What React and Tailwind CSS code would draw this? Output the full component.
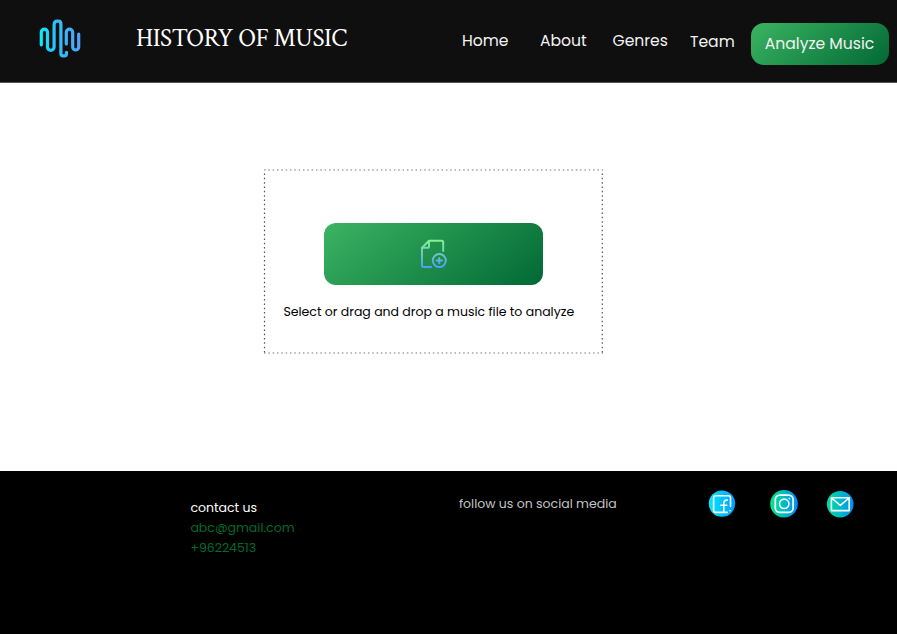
function Logo() {
  return (
    <svg className="block h-[40px] w-[44px]" viewBox="0 0 44 40" fill="none">
      <defs>
        <linearGradient id="wave" gradientUnits="userSpaceOnUse" x1="2" y1="0" x2="42" y2="0">
          <stop stopColor="#00f2fe" />
          <stop offset="0.3" stopColor="#24c8fc" />
          <stop offset="1" stopColor="#4fa2fa" />
        </linearGradient>
      </defs>
      <path
        d="M3.3 25.8V13.3a3.1 3.1 0 0 1 6.2 0v14.7a3.3 3.3 0 0 0 6.6 0V5.4q0-3.2 3-3.2h1.4q2.4 0 2.4 3v29.3q0 2.3 2.3 2.3h1.2q2.1 0 2.1-2.4v-1M28.3 25V13.3a3.2 3.2 0 0 1 6.4 0v14.7a3 3 0 0 0 6 0V15"
        stroke="url(#wave)"
        strokeWidth="3.2"
        strokeLinecap="round"
        strokeLinejoin="round"
      />
    </svg>
  );
}

function AddFileIcon() {
  return (
    <svg className="block h-[30px] w-[28px]" viewBox="0 0 28 30" fill="none">
      <defs>
        <linearGradient id="file" gradientUnits="userSpaceOnUse" x1="0" y1="1" x2="0" y2="29">
          <stop stopColor="#86f28e" />
          <stop offset="1" stopColor="#5299fa" />
        </linearGradient>
      </defs>
      <g stroke="url(#file)" strokeWidth="2" strokeLinecap="round" strokeLinejoin="round">
        <path d="M23.2 12V3.2q0-1.4-1.4-1.4H9L2 8.8V26.4q0 1.5 1.5 1.5H11" />
        <path d="M9 2v5.2q0 1.6-1.6 1.6H2.2" />
        <circle cx="19.3" cy="21.6" r="6.5" />
        <path d="M19.3 18.9v5.4M16.6 21.6h5.4" />
      </g>
    </svg>
  );
}

function FacebookIcon() {
  return (
    <svg className="block size-[28px]" viewBox="0 0 28 28" fill="none">
      <defs>
        <linearGradient id="fb" x1="0" y1="0" x2="1" y2="0">
          <stop stopColor="#00eafe" />
          <stop offset="1" stopColor="#049cff" />
        </linearGradient>
      </defs>
      <circle cx="14" cy="13.6" r="13.2" fill="url(#fb)" />
      <g stroke="#fff" strokeWidth="1.6" strokeLinecap="round">
        <path d="M22.5 16.5V7.7q0-1.9-1.9-1.9H7.5q-1.9 0-1.9 1.9v12.8q0 1.9 1.9 1.9h11.8M22.1 20.6v.1" />
        <path d="M15.8 22.1v-9q0-3 3-3h.5M12.8 15.2h6" />
      </g>
    </svg>
  );
}

function InstagramIcon() {
  return (
    <svg className="block size-[28px]" viewBox="0 0 28 28" fill="none">
      <defs>
        <linearGradient id="ig" x1="0" y1="0" x2="1" y2="0">
          <stop offset="0.05" stopColor="#00e68c" />
          <stop offset="1" stopColor="#008cff" />
        </linearGradient>
      </defs>
      <circle cx="14" cy="13.8" r="13.8" fill="url(#ig)" />
      <rect x="5.3" y="5.1" width="17.8" height="17.3" rx="4.5" stroke="#fff" strokeWidth="1.7" />
      <circle cx="14.2" cy="13.8" r="4.7" stroke="#fff" strokeWidth="1.6" />
      <circle cx="19.4" cy="8.6" r="0.9" fill="#fff" />
    </svg>
  );
}

function MailIcon() {
  return (
    <svg className="block size-[28px]" viewBox="0 0 28 28" fill="none">
      <defs>
        <linearGradient id="mail" x1="0" y1="0" x2="1" y2="0">
          <stop offset="0.05" stopColor="#00dd9c" />
          <stop offset="1" stopColor="#0090f8" />
        </linearGradient>
      </defs>
      <circle cx="14.2" cy="14.2" r="13.3" fill="url(#mail)" />
      <path d="M5.4 7.8h17.8v12.8H5.4zM5.6 8l8.7 7.3L23 8" stroke="#fff" strokeWidth="1.6" strokeLinejoin="round" />
    </svg>
  );
}

export default function App() {
  return (
    <div className="flex h-[634px] w-[897px] flex-col overflow-hidden bg-white font-['Poppins','Inter',sans-serif]">
      <header className="flex h-[83px] shrink-0 items-start border-b border-[#555] bg-[#0f0f0f] whitespace-nowrap text-[#f2f2f2]">
        <div className="mt-[18.5px] ml-[38px]">
          <Logo />
        </div>
        <h1 className="mt-[23px] ml-[54px] w-[326px] font-['Crimson_Text','Liberation_Serif',serif] text-[25px] leading-8 tracking-[-0.45px] text-white">
          HISTORY OF MUSIC
        </h1>
        <nav className="flex items-start text-[15.6px] leading-6">
          <a className="mt-[28.5px] w-[78px]">Home</a>
          <a className="mt-[29px] w-[72.5px]">About</a>
          <a className="mt-[28.5px] w-[77.5px]">Genres</a>
          <a className="mt-[29.5px] w-[60px]">Team</a>
        </nav>
        <button className="mt-[23px] ml-[0.5px] flex h-[42px] w-[138px] items-center justify-center rounded-[13px] bg-[linear-gradient(138deg,#3bb462_0%,#006633_103%)] pb-px text-[15.6px] leading-6">
          Analyze Music
        </button>
      </header>

      <main className="h-[388px] shrink-0 pt-[86px] pl-[263px]">
        <section className="flex h-[185px] w-[340px] flex-col">
          <svg className="-mb-[185px] h-[185px] w-[340px] shrink-0" fill="none">
            <path d="M1 1H340M1 184H340" stroke="#777" strokeWidth="1.2" strokeDasharray="1.5 2.83" />
            <path d="M1.5 4.5V184M339.3 4.5V184" stroke="#555" strokeWidth="1.2" strokeDasharray="1.5 2.83" />
          </svg>
          <button className="mt-[54.4px] ml-[61px] flex h-[61.3px] w-[219px] shrink-0 items-center justify-center rounded-[12px] bg-[linear-gradient(141deg,#3bb462_0%,#006633_103%)]">
            <AddFileIcon />
          </button>
          <p className="mt-[17.3px] ml-[20.4px] text-[12.5px] leading-5 whitespace-nowrap text-black">
            Select or drag and drop a music file to analyze
          </p>
        </section>
      </main>

      <footer className="flex h-[163px] shrink-0 items-start bg-black text-[12.5px] leading-5 whitespace-nowrap">
        <address className="mt-[27px] ml-[190.4px] w-[268.6px] text-[#006b2d] not-italic">
          <p className="text-white">contact us</p>
          <p>abc@gmail.com</p>
          <p>+96224513</p>
        </address>
        <p className="mt-[23px] w-[249.5px] text-[#c4c4c4]">follow us on social media</p>
        <div className="mt-[19px]">
          <FacebookIcon />
        </div>
        <div className="mt-[19px] ml-[33.5px]">
          <InstagramIcon />
        </div>
        <div className="mt-[19px] ml-[28px]">
          <MailIcon />
        </div>
      </footer>
    </div>
  );
}
